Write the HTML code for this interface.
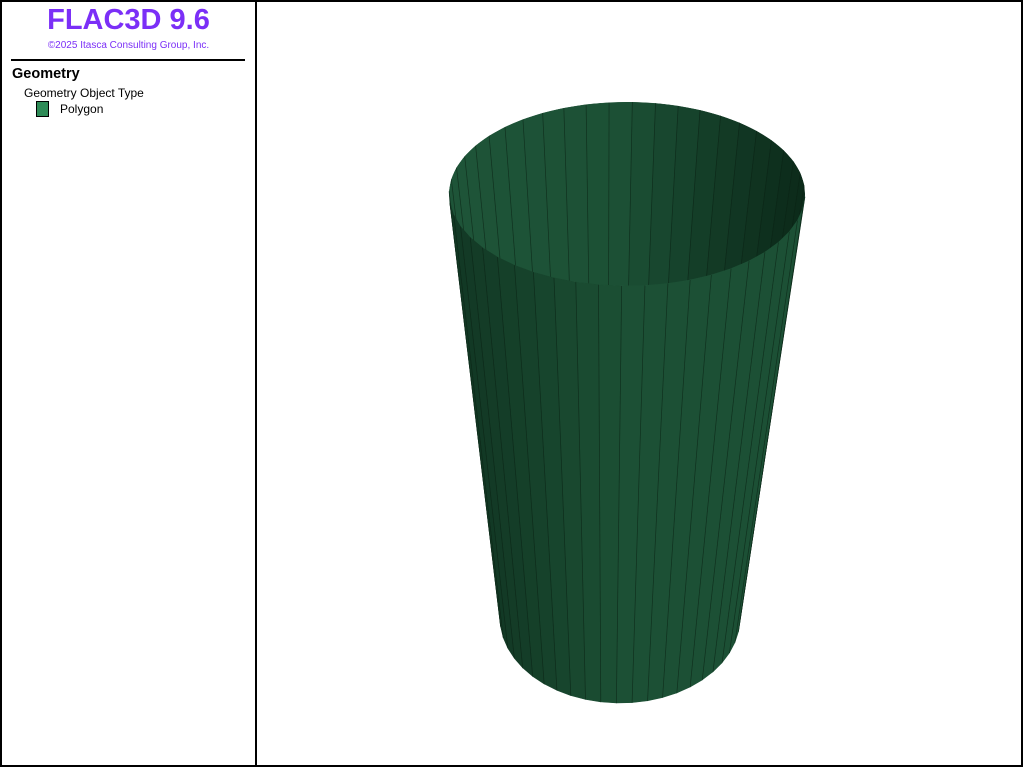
<!DOCTYPE html>
<html><head><meta charset="utf-8"><style>
html,body{margin:0;padding:0;background:#fff;}
body{width:1024px;height:768px;position:relative;overflow:hidden;font-family:"Liberation Sans",sans-serif;}
.frame{position:absolute;border:2px solid #000;box-sizing:border-box;}
.t{position:absolute;white-space:nowrap;}
</style></head><body>
<div class="frame" style="left:0;top:0;width:257px;height:767px;"></div>
<div class="frame" style="left:255px;top:0;width:768px;height:767px;"></div>
<div class="t" style="left:0;width:257px;text-align:center;top:4px;font-size:29px;font-weight:bold;color:#7b2ff7;">FLAC3D 9.6</div>
<div class="t" style="left:0;width:257px;text-align:center;top:40px;font-size:10px;color:#7b2ff7;">©2025 Itasca Consulting Group, Inc.</div>
<div style="position:absolute;left:11px;top:59px;width:234px;height:2px;background:#000;"></div>
<div class="t" style="left:12px;top:66px;font-size:14.5px;font-weight:bold;">Geometry</div>
<div class="t" style="left:24px;top:86px;font-size:12px;">Geometry Object Type</div>
<div style="position:absolute;left:36px;top:101px;width:11px;height:14px;background:#2e8b57;border:1px solid #000;"></div>
<div class="t" style="left:60px;top:102px;font-size:12px;">Polygon</div>
<svg id="s" width="1024" height="768" style="position:absolute;left:0;top:0" xmlns="http://www.w3.org/2000/svg">
<defs><clipPath id="c"><ellipse cx="627" cy="194" rx="178" ry="92"/></clipPath></defs>
<g id="inner" clip-path="url(#c)"></g>
<g id="outer"></g>
</svg>
<script>
var N=48,T={x:627,y:194,rx:178,ry:92},B={x:620,y:618,rx:120,ry:85};
function P(e,a){return [e.x+e.rx*Math.cos(a),e.y+e.ry*Math.sin(a)];}
function lerp(a,b,t){return a.map(function(v,i){return Math.round(v+(b[i]-v)*t);});}
function col(c){return 'rgb('+c.join(',')+')';}
var ns='http://www.w3.org/2000/svg',inner=document.getElementById('inner'),outer=document.getElementById('outer');
function poly(g,pts,fill){var p=document.createElementNS(ns,'polygon');p.setAttribute('points',pts.map(function(q){return q.join(',');}).join(' '));p.setAttribute('fill',fill);p.setAttribute('stroke',fill);p.setAttribute('stroke-width','0.6');g.appendChild(p);}
function line(g,a,b){var l=document.createElementNS(ns,'line');l.setAttribute('x1',a[0]);l.setAttribute('y1',a[1]);l.setAttribute('x2',b[0]);l.setAttribute('y2',b[1]);l.setAttribute('stroke','#0b2416');l.setAttribute('stroke-width','0.7');l.setAttribute('stroke-opacity','0.7');g.appendChild(l);}
[inner,outer].forEach(function(g,gi){
 var L=[];
 for(var i=0;i<N;i++){
  var a0=2*Math.PI*i/N+0.03,a1=2*Math.PI*(i+1)/N+0.03,am=(a0+a1)/2;
  var t0=P(T,a0),t1=P(T,a1),b0=P(B,a0),b1=P(B,a1);
  var c=Math.cos(am),k=(c+1)/2,s=Math.sin(am);
  if(gi==0&&s<0){
   var cc=k<0.5?lerp([30,84,56],[28,80,53],k*2):lerp([28,80,53],[12,42,26],(k-0.5)*2);
   poly(g,[t0,t1,b1,b0],col(cc));L.push([t0,b0]);
  }
  if(gi==1&&s>0){
   var cc=k<0.5?lerp([18,56,36],[28,80,53],k*2):lerp([28,80,53],[28,80,53],(k-0.5)*2);
   poly(g,[t0,t1,b1,b0],col(cc));L.push([t0,b0]);
  }
 }
 L.forEach(function(q){line(g,q[0],q[1]);});
});
</script>
</body></html>
